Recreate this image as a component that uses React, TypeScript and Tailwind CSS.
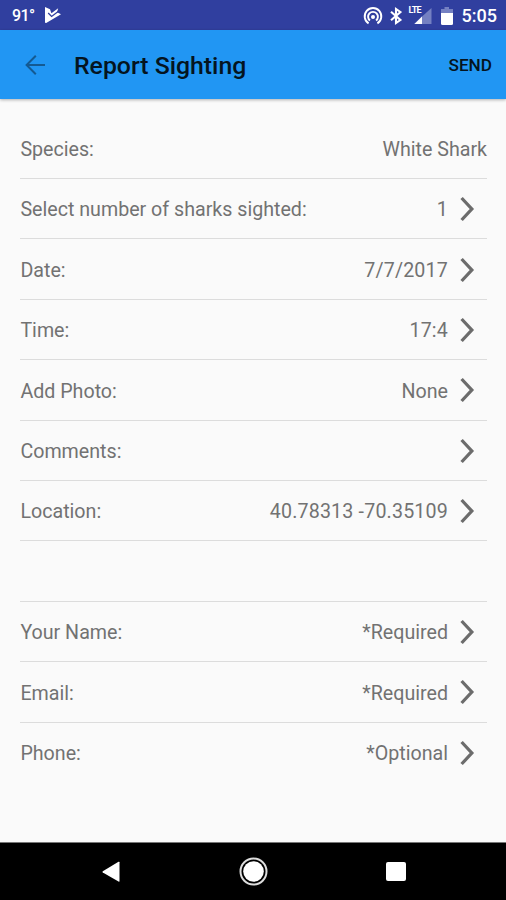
import React from "react";

type Row = { label: string; value: string; chevron: boolean };

const sighting: Row[] = [
  { label: "Species:", value: "White Shark", chevron: false },
  { label: "Select number of sharks sighted:", value: "1", chevron: true },
  { label: "Date:", value: "7/7/2017", chevron: true },
  { label: "Time:", value: "17:4", chevron: true },
  { label: "Add Photo:", value: "None", chevron: true },
  { label: "Comments:", value: "", chevron: true },
  { label: "Location:", value: "40.78313 -70.35109", chevron: true },
  { label: "", value: "", chevron: false },
  { label: "Your Name:", value: "*Required", chevron: true },
  { label: "Email:", value: "*Required", chevron: true },
  { label: "Phone:", value: "*Optional", chevron: true },
];

function Chevron() {
  return (
    <svg className="ml-3 mr-[11px] h-[26px] w-4 shrink-0" viewBox="0 0 16 26" fill="none">
      <path d="M1.6 2 L11.8 13 L1.6 24" stroke="#6c6c6c" strokeWidth="3.3" />
    </svg>
  );
}

function ListRow({ row, last }: { row: Row; last: boolean }) {
  const numeric = /^\d/.test(row.value);
  return (
    <div
      className={`flex h-[60.4px] items-center justify-between border-b text-[19.65px] text-[#727272] ${
        last ? "border-transparent" : "border-[#dcdcdc]"
      }`}
    >
      <span className="whitespace-nowrap pl-[0.4px] pt-[3px]">{row.label}</span>
      <div className="flex items-center pt-px">
        <span className={`whitespace-nowrap pt-[2px] ${numeric ? "tracking-[0.17px]" : ""}`}>{row.value}</span>
        {row.chevron && <Chevron />}
      </div>
    </div>
  );
}

function StatusBar() {
  return (
    <div className="flex h-[30px] items-center bg-[#303f9f] pl-3 pr-[9px] text-white">
      <span className="w-[23px] whitespace-nowrap pt-px text-[16px] font-medium leading-none tracking-[-0.6px]">91°</span>
      <svg className="ml-[9px] h-[18px] w-[18px]" viewBox="0 0 18 18">
        <path d="M1 1 L6 3.2 L7.4 7.2 L14.2 2.2 L13 6.2 L17 8.2 L2.2 17 Q1 17.4 1 16Z" fill="#fff" />
        <path d="M4.2 7 L7.6 10.4 L14.5 5.2" fill="none" stroke="#303f9f" strokeWidth="1.3" />
      </svg>
      <div className="ml-auto flex items-center">
        <svg className="mt-px h-[18px] w-[20px]" viewBox="0 0 20 18" fill="none" stroke="#fff" strokeWidth="1.9">
          <path d="M5.6 16.4 A8.3 8.3 0 1 1 14.4 16.4" />
          <path d="M7 13.6 A4.9 4.9 0 1 1 13 13.6" />
          <circle cx="10" cy="10" r="2" fill="#fff" stroke="none" />
        </svg>
        <svg className="ml-[6px] mt-px h-[18px] w-[14px]" viewBox="0 0 14 18" fill="none" stroke="#fff" strokeWidth="2.1">
          <path d="M2 4.8 L11.4 13 L7 16 V2 L11.4 5 L2 13.2" />
        </svg>
        <div className="relative ml-[6px] h-[20px] w-[23px]">
          <svg className="mt-px h-[20px] w-[23px]" viewBox="0 0 23 20">
            <path d="M22.5 2 V18 H5 L13 10.5Z" fill="#7480c2" />
            <path d="M5.5 18 L13 10.6 V18Z" fill="#fff" />
          </svg>
          <span className="absolute left-0 top-px bg-[#303f9f] text-[9px] font-bold leading-none tracking-[-0.8px]">LTE</span>
        </div>
        <svg className="ml-2 mt-px h-[18px] w-[14px]" viewBox="0 0 14 18">
          <path d="M4.5 0 H9 V2 H13 V6 H1 V2 H4.5Z" fill="#7480c2" />
          <path d="M1 6 H13 V16.5 Q13 18 11.5 18 H2.5 Q1 18 1 16.5Z" fill="#fff" />
        </svg>
        <span className="ml-[8px] whitespace-nowrap pt-[2px] text-[18px] font-medium leading-none">5:05</span>
      </div>
    </div>
  );
}

export default function App() {
  return (
    <div className="flex h-[900px] w-[506px] flex-col overflow-hidden bg-[#fafafa] font-['Roboto',sans-serif]">
      <StatusBar />
      <header className="flex h-[69px] shrink-0 items-center bg-[#2196f3] pl-[25px] pr-[14px] shadow-[0_1px_3px_rgba(0,0,0,0.3)]">
        <svg className="h-5 w-5" viewBox="0 0 20 20" fill="none" stroke="#145a92" strokeWidth="2">
          <path d="M20 10 H2 M10.8 0.8 L1.6 10 L10.8 19.2" />
        </svg>
        <h1 className="ml-[29px] whitespace-nowrap pt-[3px] text-[24.8px] font-medium text-[#041420]">Report Sighting</h1>
        <button className="ml-auto pt-[2px] text-[17.2px] font-medium text-[#041420]">SEND</button>
      </header>
      <main className="flex-1 pl-5 pr-[19px] pt-[19.6px]">
        {sighting.map((row, i) => (
          <ListRow key={i} row={row} last={i === sighting.length - 1} />
        ))}
      </main>
      <nav className="flex h-[58px] shrink-0 items-center border-t border-[#777] bg-black">
        <svg className="ml-[102px] h-[22px] w-[19px]" viewBox="0 0 19 22">
          <path d="M17.5 1.2 V20.2 Q17.5 21 16.5 20.5 L0.8 11.5 Q0 11 0.8 10.2 L16.5 0.8 Q17.5 0.4 17.5 1.2Z" fill="#fff" />
        </svg>
        <svg className="ml-[118px] h-[29px] w-[29px]" viewBox="0 0 29 29">
          <circle cx="14.5" cy="14.5" r="13" fill="none" stroke="#ddd" strokeWidth="2" />
          <circle cx="14.5" cy="14.5" r="10.3" fill="#fff" />
        </svg>
        <div className="ml-[118px] h-[19px] w-[20px] rounded-[2px] bg-white" />
      </nav>
    </div>
  );
}
